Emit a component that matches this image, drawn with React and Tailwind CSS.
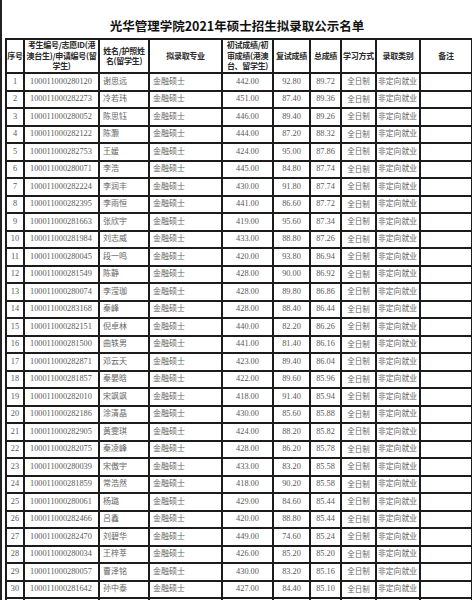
import React from 'react';

const rows = [
  ['100011000280120', '谢思远', '442.00', '92.80', '89.72'],
  ['100011000282273', '冷若玮', '451.00', '87.40', '89.36'],
  ['100011000280052', '陈思钰', '446.00', '89.40', '89.26'],
  ['100011000282122', '陈灏', '444.00', '87.20', '88.32'],
  ['100011000282753', '王媛', '424.00', '95.00', '87.86'],
  ['100011000280071', '李浩', '445.00', '84.80', '87.74'],
  ['100011000282224', '李润丰', '430.00', '91.80', '87.74'],
  ['100011000282395', '李雨恒', '441.00', '86.60', '87.72'],
  ['100011000281663', '张欣宇', '419.00', '95.60', '87.34'],
  ['100011000281984', '刘志威', '433.00', '88.80', '87.26'],
  ['100011000280045', '段一鸣', '420.00', '93.80', '86.94'],
  ['100011000281549', '陈静', '428.00', '90.00', '86.92'],
  ['100011000280074', '李滢珈', '428.00', '89.80', '86.86'],
  ['100011000283168', '秦峰', '428.00', '88.40', '86.44'],
  ['100011000282151', '倪卓林', '440.00', '82.20', '86.26'],
  ['100011000281500', '曲轶男', '441.00', '81.40', '86.16'],
  ['100011000282871', '邓云天', '423.00', '89.40', '86.04'],
  ['100011000281857', '秦晏晗', '422.00', '89.60', '85.96'],
  ['100011000282010', '宋飒飒', '418.00', '91.40', '85.94'],
  ['100011000282186', '涂清晶', '430.00', '85.60', '85.88'],
  ['100011000282905', '黄雯琪', '424.00', '88.20', '85.82'],
  ['100011000282075', '秦凌峰', '428.00', '86.20', '85.78'],
  ['100011000280039', '宋傲宇', '433.00', '83.20', '85.58'],
  ['100011000281859', '常浩然', '418.00', '90.20', '85.58'],
  ['100011000280061', '杨璐', '429.00', '84.60', '85.44'],
  ['100011000282466', '吕鑫', '420.00', '88.80', '85.44'],
  ['100011000282470', '刘碧华', '449.00', '74.60', '85.24'],
  ['100011000280034', '王梓莘', '426.00', '85.20', '85.20'],
  ['100011000280057', '曹泽铭', '430.00', '83.20', '85.16'],
  ['100011000281642', '孙中泰', '427.00', '84.40', '85.10'],
];

const th = 'border-2 border-[#1c1c1c] text-center align-middle font-bold text-[#2a2a2a] text-[8px] leading-[10.5px] tracking-[-0.3px] whitespace-nowrap p-0 overflow-hidden';
const td = 'border-2 border-[#1c1c1c] align-middle text-[#5a5a5a] p-0 whitespace-nowrap overflow-hidden';

export default function App() {
  return (
    <div className="min-h-[600px] bg-white border-l-2 border-[#222] font-['Liberation_Serif','Noto_Sans_CJK_SC',serif]">
      <h1 className="pt-[19px] pb-[5px] text-center text-[12.5px] leading-[14px] font-bold text-[#111] font-['Noto_Sans_CJK_SC',sans-serif]">
        光华管理学院2021年硕士招生拟录取公示名单
      </h1>
      <table className="ml-[3px] w-[466px] table-fixed border-collapse">
        <colgroup>
          <col className="w-[18px]" />
          <col className="w-[75px]" />
          <col className="w-[50px]" />
          <col className="w-[73px]" />
          <col className="w-[51px]" />
          <col className="w-[37px]" />
          <col className="w-[31px]" />
          <col className="w-[35px]" />
          <col className="w-[44px]" />
          <col className="w-[52px]" />
        </colgroup>
        <thead className="font-['Noto_Sans_CJK_SC',sans-serif]">
          <tr className="h-[34px]">
            <th className={th}>序号</th>
            <th className={th}>
              考生编号/志愿ID(港<br />澳台生)/申请编号(留<br />学生)
            </th>
            <th className={th}>
              姓名/护照姓<br />名(留学生)
            </th>
            <th className={th}>拟录取专业</th>
            <th className={th}>
              初试成绩/初<br />审成绩(港澳<br />台、留学生)
            </th>
            <th className={th}>复试成绩</th>
            <th className={th}>总成绩</th>
            <th className={th}>学习方式</th>
            <th className={th}>录取类别</th>
            <th className={th}>备注</th>
          </tr>
        </thead>
        <tbody className="text-[8.3px]">
          {rows.map(([id, name, first, second, total], i) => (
            <tr key={id} className="h-[17.5px]">
              <td className={`${td} text-center`}>{i + 1}</td>
              <td className={`${td} pl-[5px]`}>{id}</td>
              <td className={`${td} pl-[3px] text-[8px] text-[#666]`}>{name}</td>
              <td className={`${td} pl-[3px] text-[8px] text-[#666]`}>金融硕士</td>
              <td className={`${td} text-center`}>{first}</td>
              <td className={`${td} text-center`}>{second}</td>
              <td className={`${td} text-center`}>{total}</td>
              <td className={`${td} text-center text-[7.5px] text-[#666]`}>全日制</td>
              <td className={`${td} pl-[1px] text-[7.8px] text-[#666]`}>非定向就业</td>
              <td className={td}></td>
            </tr>
          ))}
          <tr className="h-[17.5px]">
            {Array.from({ length: 10 }).map((_, k) => (
              <td key={k} className={td}></td>
            ))}
          </tr>
        </tbody>
      </table>
    </div>
  );
}
